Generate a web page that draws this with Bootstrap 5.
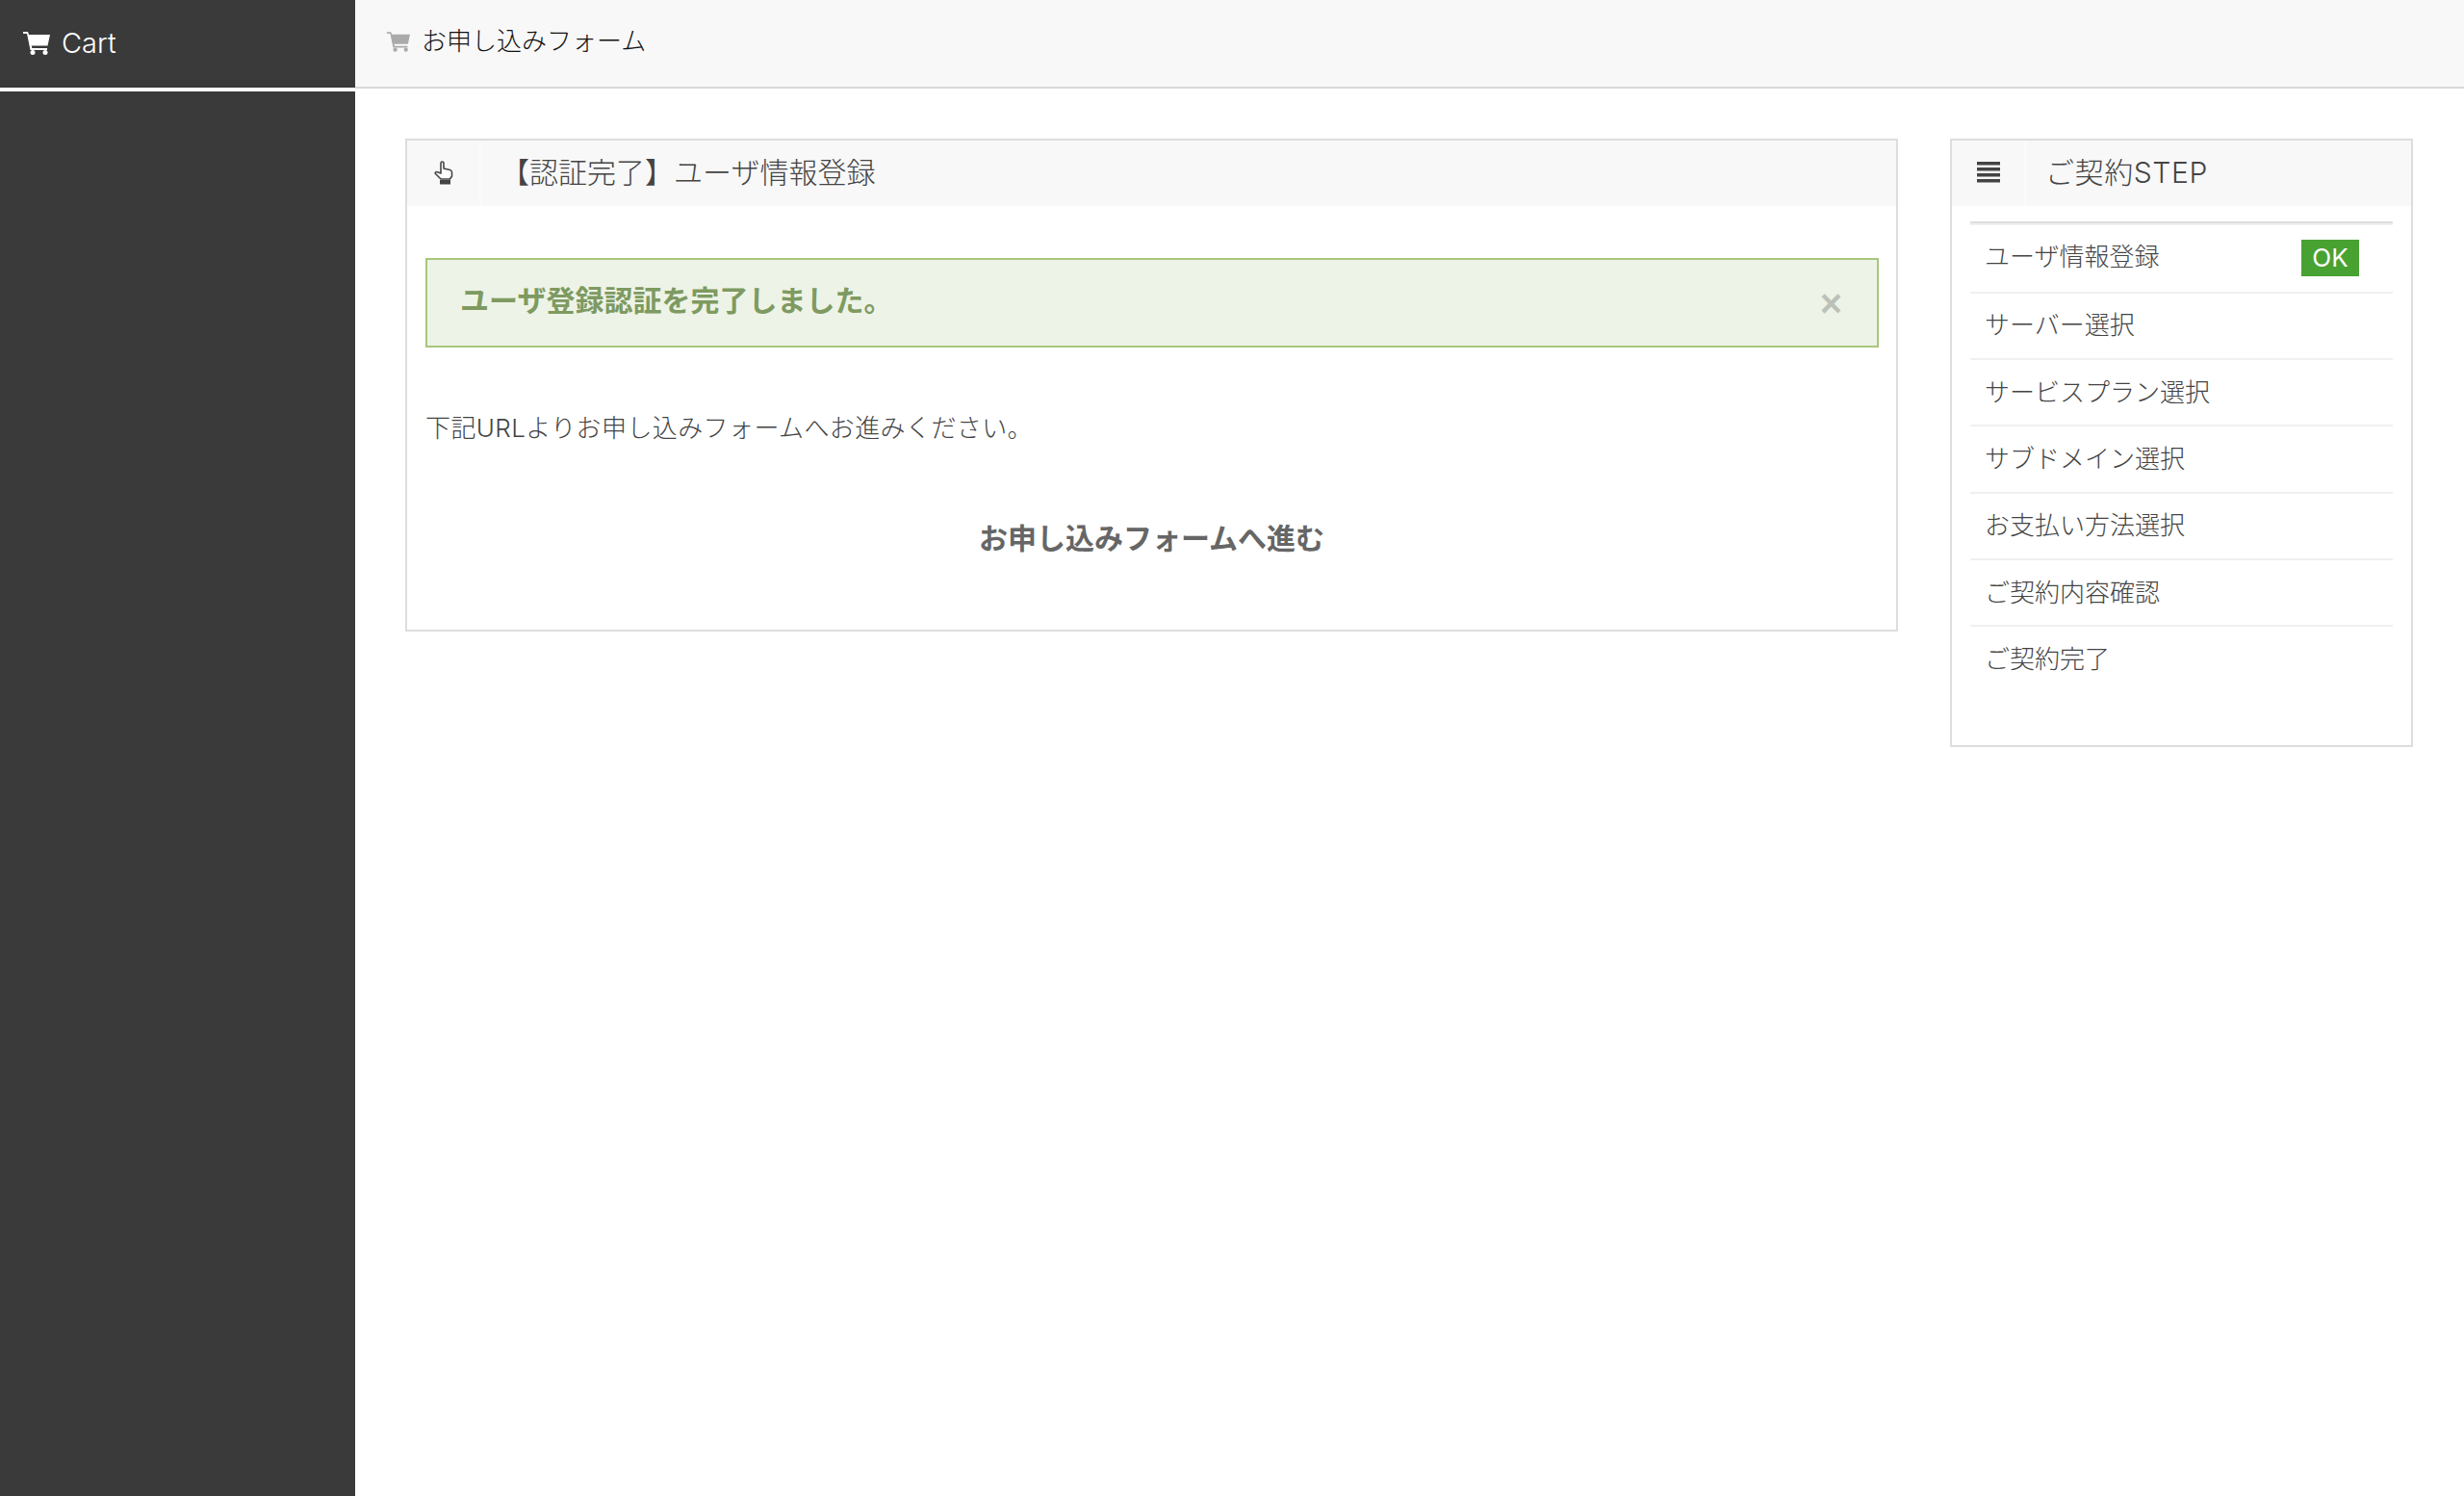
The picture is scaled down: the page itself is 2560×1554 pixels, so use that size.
<!DOCTYPE html>
<html lang="ja">
<head>
<meta charset="utf-8">
<title>お申し込みフォーム</title>
<link href="https://cdn.jsdelivr.net/npm/bootstrap@5.3.0/dist/css/bootstrap.min.css" rel="stylesheet">
<style>
body { font-family: Inter, "Noto Sans CJK JP", "Noto Sans", sans-serif; font-size: 26px; font-weight: 300; color: #444; background: #fff; }
.side-col { width: 369px; background: #3a3a3a; min-height: 1554px; }
.brand-bar { height: 95px; border-bottom: 4px solid #fff; padding-left: 24px; padding-bottom: 2px; color: #fff; font-size: 29px; font-weight: 300; gap: 12px; }
.top-bar { height: 92px; background: #f8f8f8; border-bottom: 2px solid #d8d8d8; padding-left: 33px; color: #111; gap: 12px; }
.top-label { padding-bottom: 5px; }
.page-body { padding: 52px 53px 52px 52px; gap: 54px; }
.box-main { width: 1551px; height: 512px; }
.box-side { width: 481px; height: 632px; }
.box-line { border: 2px solid #ddd; border-radius: 0; }
.box-head { height: 68px; background: #f8f8f8; font-size: 30px; color: #444; }
.box-icon { width: 77px; height: 100%; border-right: 2px solid #fbfbfb; padding-bottom: 2px; }
.box-title { padding-left: 20px; padding-bottom: 2px; }
.box-side .box-title { letter-spacing: .6px; }
.notice-wrap { padding-top: 54px; }
.notice { background: #edf3e6; border: 2px solid #a9c67e; border-radius: 0; height: 93px; margin: 0 18px 0 19px; padding: 0 34px 4px; color: #7e9a61; font-size: 30px; font-weight: 700; }
.notice-x { color: #000; opacity: .2; font-family: "Liberation Sans", sans-serif; font-size: 40px; font-weight: 700; line-height: 1; margin-right: 2px; padding-top: 4px; }
.intro-text { margin: 0 0 0 19px; padding-top: 64px; line-height: 40px; letter-spacing: .4px; }
.go-link { font-size: 30px; font-weight: 700; color: #666; text-decoration: none; text-align: center; display: block; padding-top: 72px; line-height: 44px; }
.step-list { margin: 16px 19px 0; }
.step-list .list-group-item { border: 0; border-top: 2px solid #f0f0f0; padding: 0 15px 1px; height: 69.4px; color: #444; background: transparent; }
.step-list .list-group-item:first-child { height: 70.5px; padding-bottom: 3px; }
.ok-tag { width: 60px; height: 38px; margin-top: 3px; margin-right: 20px; background: #48a232; color: #fff; border-radius: 0; font-size: 26px; font-weight: 400; padding: 0; }
</style>
</head>
<body>
<div class="d-flex">
  <aside class="side-col flex-shrink-0">
    <div class="brand-bar d-flex align-items-center">
      <svg width="28" height="24" viewBox="0 0 28 24" fill="#fff" aria-hidden="true"><path d="M0 0h5l1 3h22l-2.500 11.500H8.800l.5 2.500H25v2H7.500L4 2H0z"/><circle cx="10" cy="21.500" r="2.500"/><circle cx="23" cy="21.500" r="2.500"/></svg>
      <span>Cart</span>
    </div>
  </aside>
  <div class="flex-grow-1">
    <div class="top-bar d-flex align-items-center">
      <svg class="mb-1" width="24" height="21" viewBox="0 0 28 24" fill="#aaa" aria-hidden="true"><path d="M0 0h5l1 3h22l-2.500 11.500H8.800l.5 2.500H25v2H7.500L4 2H0z"/><circle cx="10" cy="21.500" r="2.500"/><circle cx="23" cy="21.500" r="2.500"/></svg>
      <span class="top-label">お申し込みフォーム</span>
    </div>
    <div class="page-body d-flex align-items-start">
      <section class="box-main box-line card">
        <div class="box-head d-flex align-items-center">
          <div class="box-icon d-flex align-items-center justify-content-center">
            <svg width="20" height="25" viewBox="0 0 20 25" aria-hidden="true"><path d="M7 13V2.500a1.500 1.500 0 0 1 3 0V8l6.500 1.500c1.500.4 2 1 2 2.500v4l-2 3H7L1.500 13.500c-1-1 .5-2.500 1.800-1.800z" fill="#fff" stroke="#444" stroke-width="1.600" stroke-linejoin="round"/><rect x="6" y="20" width="11" height="4.500" fill="#444"/></svg>
          </div>
          <div class="box-title">【認証完了】ユーザ情報登録</div>
        </div>
        <div class="notice-wrap">
          <div class="notice alert d-flex align-items-center justify-content-between mb-0" role="alert">
            <span>ユーザ登録認証を完了しました。</span>
            <span class="notice-x">×</span>
          </div>
          <p class="intro-text">下記URLよりお申し込みフォームへお進みください。</p>
          <a class="go-link" href="#">お申し込みフォームへ進む</a>
        </div>
      </section>
      <section class="box-side box-line card flex-shrink-0">
        <div class="box-head d-flex align-items-center">
          <div class="box-icon d-flex align-items-center justify-content-center">
            <svg width="24" height="22" viewBox="0 0 24 22" fill="#444" aria-hidden="true"><rect width="24" height="3.500" y="0"/><rect width="24" height="3.500" y="6"/><rect width="24" height="3.500" y="12"/><rect width="24" height="3.500" y="18"/></svg>
          </div>
          <div class="box-title">ご契約STEP</div>
        </div>
        <ul class="step-list list-group list-group-flush">
          <li class="list-group-item d-flex align-items-center justify-content-between"><span>ユーザ情報登録</span><span class="ok-tag badge d-flex align-items-center justify-content-center">OK</span></li>
          <li class="list-group-item d-flex align-items-center">サーバー選択</li>
          <li class="list-group-item d-flex align-items-center">サービスプラン選択</li>
          <li class="list-group-item d-flex align-items-center">サブドメイン選択</li>
          <li class="list-group-item d-flex align-items-center">お支払い方法選択</li>
          <li class="list-group-item d-flex align-items-center">ご契約内容確認</li>
          <li class="list-group-item d-flex align-items-center">ご契約完了</li>
        </ul>
      </section>
    </div>
  </div>
</div>
</body>
</html>
